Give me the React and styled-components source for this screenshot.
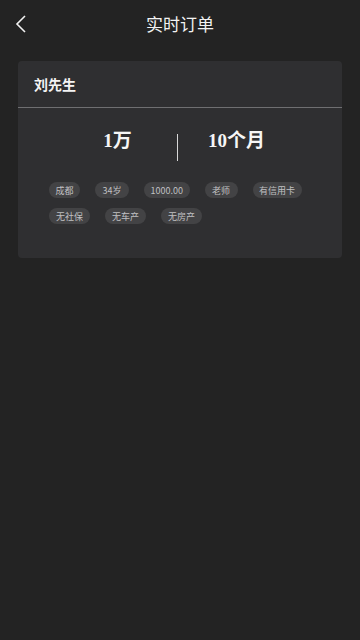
import React from "react";
import styled, { createGlobalStyle } from "styled-components";

const Global = createGlobalStyle`
  html, body { margin: 0; padding: 0; background: #232323; }
  body { font-family: "Noto Sans CJK SC", "Noto Sans", sans-serif; }
`;

const Page = styled.div`
  width: 360px;
  height: 640px;
  background: #232323;
  display: flex;
  flex-direction: column;
`;

const NavBar = styled.div`
  height: 48px;
  display: flex;
  align-items: center;
  justify-content: center;
  position: relative;
`;

const Back = styled.svg`
  position: absolute;
  left: 14px;
  top: 14px;
`;

const Title = styled.div`
  color: #f2f2f2;
  font-size: 17px;
  margin-top: -1px;
`;

const Card = styled.div`
  margin: 13px 18px 0;
  background: #2f2f31;
  border-radius: 4px;
  padding-bottom: 34px;
`;

const CardHeader = styled.div`
  height: 46px;
  padding-left: 16px;
  display: flex;
  align-items: center;
  color: #f4f4f4;
  font-size: 14px;
  font-weight: 700;
  border-bottom: 1px solid #6f6f71;
`;

const Stats = styled.div`
  display: flex;
  justify-content: center;
  align-items: center;
  padding-top: 12px;
  padding-right: 6px;
`;

const Stat = styled.div`
  width: 118px;
  text-align: center;
  color: #f6f6f6;
  font-family: "Liberation Serif", "Noto Sans CJK SC", serif;
  font-weight: 700;
  font-size: 19px;
  line-height: 24px;
`;

const VLine = styled.div`
  width: 1px;
  height: 27px;
  background: #d8d8d8;
  margin-top: 14px;
`;

const Tags = styled.div`
  display: flex;
  flex-wrap: wrap;
  gap: 10px 15px;
  padding: 21px 30px 0 31px;
`;

const Tag = styled.div`
  height: 16px;
  padding: 0 ${(p) => p.$pad}px;
  border-radius: 8px;
  background: #434345;
  color: #c0c0c2;
  font-size: 9px;
  display: flex;
  align-items: center;
  line-height: 1;
`;

const row = [
  ["成都", 6.5],
  ["34岁", 7.5],
  ["1000.00", 6.5],
  ["老师", 7.5],
  ["有信用卡", 6.5],
  ["无社保", 7],
  ["无车产", 7],
  ["无房产", 7],
];

export default function App() {
  return (
    <Page>
      <Global />
      <NavBar>
        <Back width="14" height="20" viewBox="0 0 14 20">
          <path d="M11 2 L3 10 L11 18" fill="none" stroke="#f2f2f2" strokeWidth="1.6" />
        </Back>
        <Title>实时订单</Title>
      </NavBar>
      <Card>
        <CardHeader>刘先生</CardHeader>
        <Stats>
          <Stat>1万</Stat>
          <VLine />
          <Stat>10个月</Stat>
        </Stats>
        <Tags>
          {row.map(([t, p]) => (
            <Tag key={t} $pad={p}>{t}</Tag>
          ))}
        </Tags>
      </Card>
    </Page>
  );
}
